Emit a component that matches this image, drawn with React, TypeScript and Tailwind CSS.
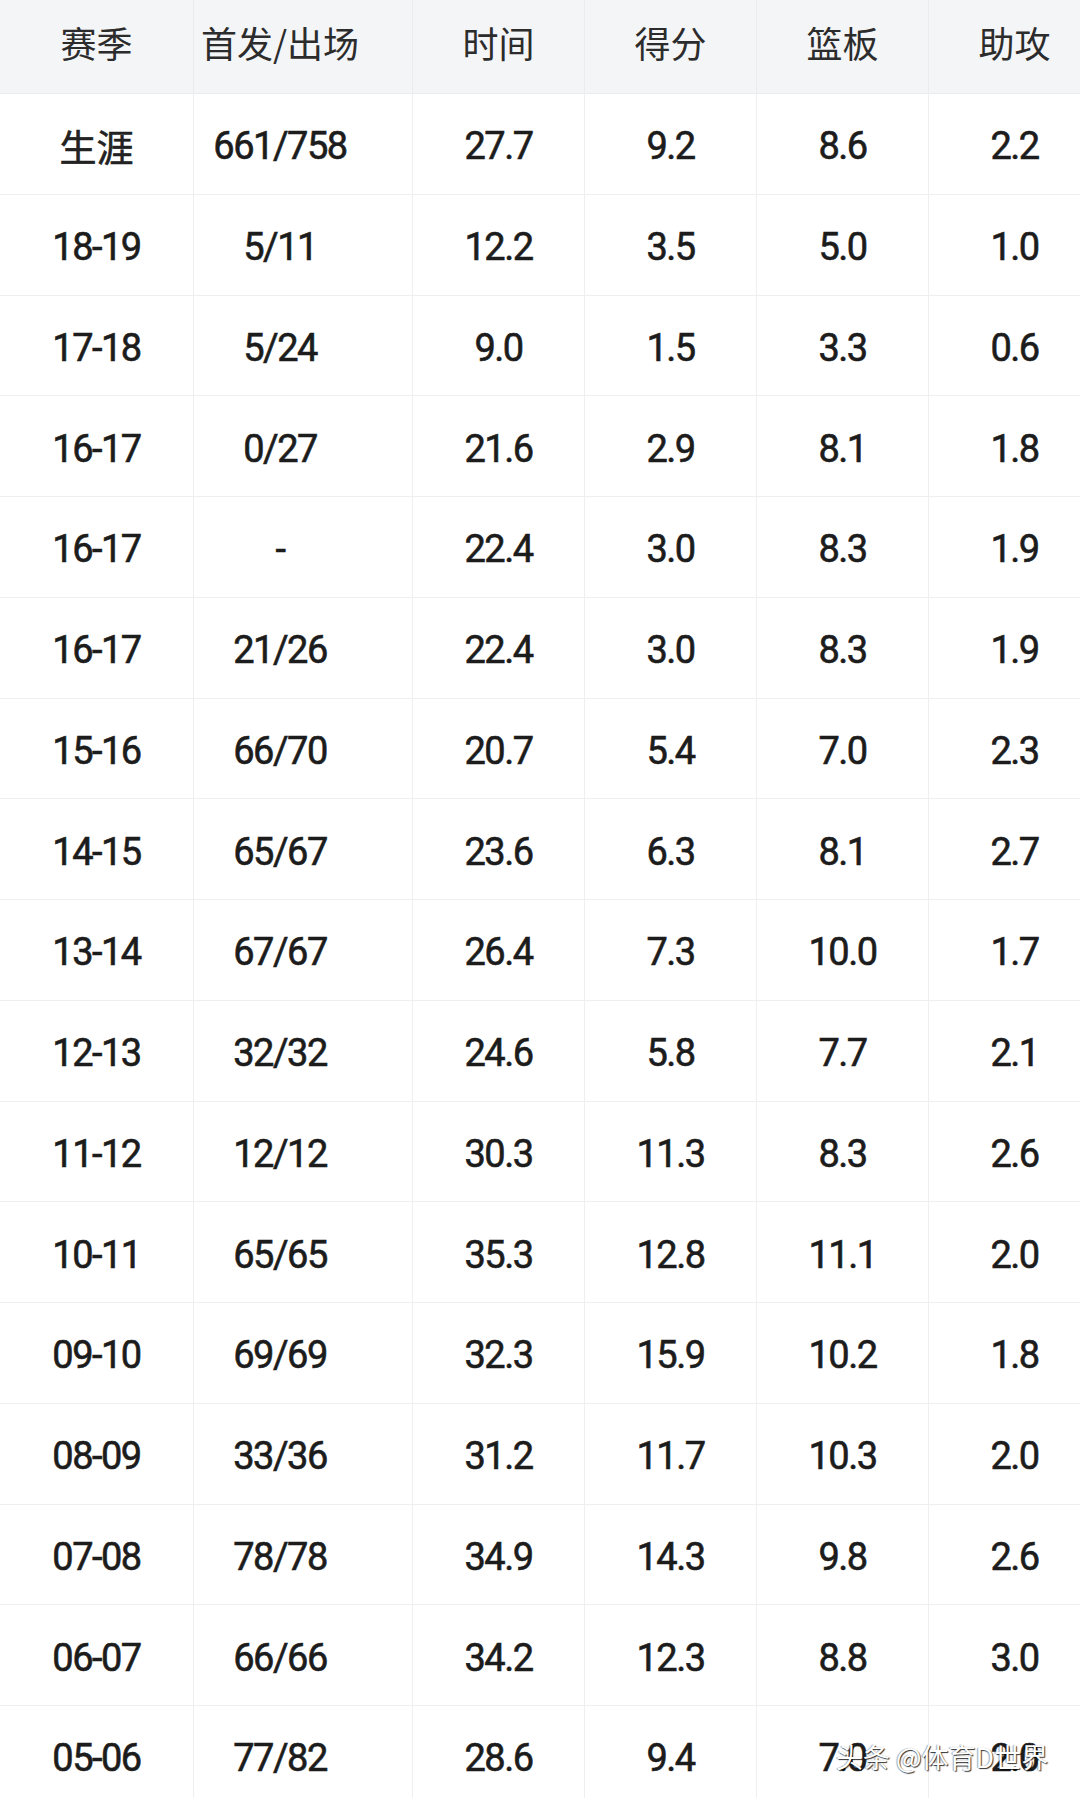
import React from "react";

const headers = ["赛季", "首发/出场", "时间", "得分", "篮板", "助攻"];

const rows: string[][] = [
  ["生涯", "661/758", "27.7", "9.2", "8.6", "2.2"],
  ["18-19", "5/11", "12.2", "3.5", "5.0", "1.0"],
  ["17-18", "5/24", "9.0", "1.5", "3.3", "0.6"],
  ["16-17", "0/27", "21.6", "2.9", "8.1", "1.8"],
  ["16-17", "-", "22.4", "3.0", "8.3", "1.9"],
  ["16-17", "21/26", "22.4", "3.0", "8.3", "1.9"],
  ["15-16", "66/70", "20.7", "5.4", "7.0", "2.3"],
  ["14-15", "65/67", "23.6", "6.3", "8.1", "2.7"],
  ["13-14", "67/67", "26.4", "7.3", "10.0", "1.7"],
  ["12-13", "32/32", "24.6", "5.8", "7.7", "2.1"],
  ["11-12", "12/12", "30.3", "11.3", "8.3", "2.6"],
  ["10-11", "65/65", "35.3", "12.8", "11.1", "2.0"],
  ["09-10", "69/69", "32.3", "15.9", "10.2", "1.8"],
  ["08-09", "33/36", "31.2", "11.7", "10.3", "2.0"],
  ["07-08", "78/78", "34.9", "14.3", "9.8", "2.6"],
  ["06-07", "66/66", "34.2", "12.3", "8.8", "3.0"],
  ["05-06", "77/82", "28.6", "9.4", "7.0", "2.0"],
];

// column 2 text sits left of the cell centre in the source table
const colPad = ["", "pr-[46px]", "", "", "", ""];

export default function App() {
  return (
    <div className="relative w-[1080px] h-[1798px] overflow-hidden bg-white font-['Roboto','Noto_Sans_CJK_SC',sans-serif]">
      <div className="grid grid-cols-[194px_219px_172px_172px_172px_172px] w-[1101px]">
        {/* Header */}
        {headers.map((h, i) => (
          <div
            key={h}
            className={`h-[94px] flex items-center justify-center pb-[10px] bg-[#f4f5f7] border-r border-b border-[#ebecee] ${colPad[i]}`}
          >
            <span className="font-['Noto_Sans_CJK_SC',sans-serif] text-[36px] font-normal text-[#2c2c2c]">
              {h}
            </span>
          </div>
        ))}

        {/* Rows */}
        {rows.map((r, ri) =>
          r.map((v, ci) => (
            <div
              key={`${ri}-${ci}`}
              className={`h-[100.75px] flex items-center justify-center pt-[6px] border-r border-b border-[#efefef] ${colPad[ci]}`}
            >
              {v === "生涯" ? (
                <span className="font-['Noto_Sans_CJK_SC',sans-serif] text-[37px] font-normal text-[#222] [-webkit-text-stroke:0.6px_#222]">
                  {v}
                </span>
              ) : (
                <span className="text-[38px] font-normal tracking-[-1.5px] text-[#1c1c1c] [-webkit-text-stroke:0.6px_#1c1c1c]">
                  {v}
                </span>
              )}
            </div>
          ))
        )}
      </div>

      {/* Watermark */}
      <div className="absolute left-[836px] top-[1740px] text-[27px] leading-[34px] text-white font-['Noto_Sans_CJK_SC',sans-serif] [text-shadow:1px_1px_1px_rgba(0,0,0,0.8),-1px_0_1px_rgba(0,0,0,0.35)]">
        头条 @体育D世界
      </div>
    </div>
  );
}
